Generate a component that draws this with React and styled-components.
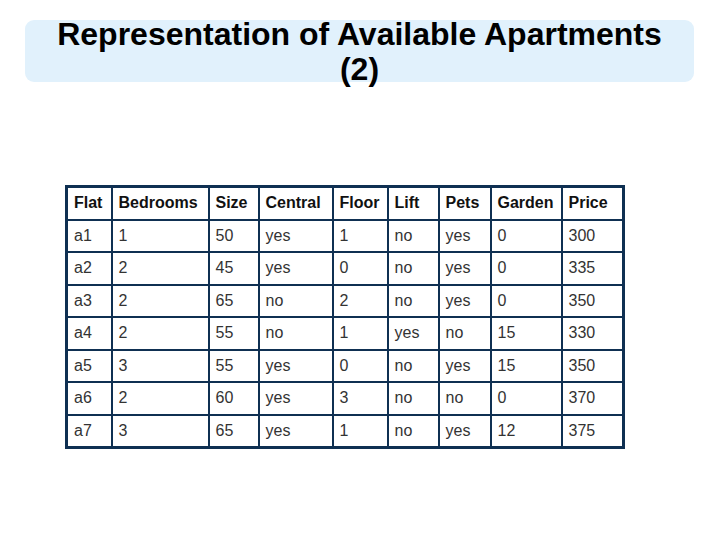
import styled, { createGlobalStyle } from 'styled-components';

const GlobalStyle = createGlobalStyle`
    body {
        margin: 0;
        background: #ffffff;
        font-family: "Liberation Sans", Arial, sans-serif;
    }
`

const Page = styled.div`
    width: 720px;
    height: 540px;
    padding-top: 20px;
    box-sizing: border-box;
`

const TitleBox = styled.div`
    margin: 0 26px 0 25px;
    height: 62px;
    background: #e1f1fc;
    border-radius: 9px;
    display: flex;
    align-items: center;
    justify-content: center;
`

const Title = styled.h1`
    margin: 0;
    padding-top: 2px;
    font-size: 32px;
    line-height: 35px;
    font-weight: bold;
    color: #000;
    text-align: center;
`

const Table = styled.table`
    margin: 103px 0 0 65px;
    border-collapse: collapse;
    border: 3px solid #0f3052;
    table-layout: fixed;
    width: 557px;
    font-size: 16px;
    color: #222;
`

const Cell = styled.td`
    border: 2px solid #0f3052;
    height: 30.5px;
    padding: 0 0 0 6px;
    text-align: left;
    font-weight: ${p => (p.$head ? 'bold' : 'normal')};
    color: ${p => (p.$head ? '#111' : '#333')};
    white-space: nowrap;
`

const widths = [45, 97, 50, 74, 55, 51, 52, 71, 62]

const head = ['Flat', 'Bedrooms', 'Size', 'Central', 'Floor', 'Lift', 'Pets', 'Garden', 'Price']

const rows = [
    ['a1', '1', '50', 'yes', '1', 'no', 'yes', '0', '300'],
    ['a2', '2', '45', 'yes', '0', 'no', 'yes', '0', '335'],
    ['a3', '2', '65', 'no', '2', 'no', 'yes', '0', '350'],
    ['a4', '2', '55', 'no', '1', 'yes', 'no', '15', '330'],
    ['a5', '3', '55', 'yes', '0', 'no', 'yes', '15', '350'],
    ['a6', '2', '60', 'yes', '3', 'no', 'no', '0', '370'],
    ['a7', '3', '65', 'yes', '1', 'no', 'yes', '12', '375'],
]

function App() {
    return (
        <Page>
            <GlobalStyle />
            <TitleBox>
                <Title>Representation of Available Apartments<br />(2)</Title>
            </TitleBox>
            <Table>
                <colgroup>
                    {widths.map((w, i) => <col key={i} style={{ width: w }} />)}
                </colgroup>
                <thead>
                    <tr>
                        {head.map(h => <Cell as="th" key={h} $head>{h}</Cell>)}
                    </tr>
                </thead>
                <tbody>
                    {rows.map(r => (
                        <tr key={r[0]}>
                            {r.map((v, i) => <Cell key={i}>{v}</Cell>)}
                        </tr>
                    ))}
                </tbody>
            </Table>
        </Page>
    );
}

export default App;
